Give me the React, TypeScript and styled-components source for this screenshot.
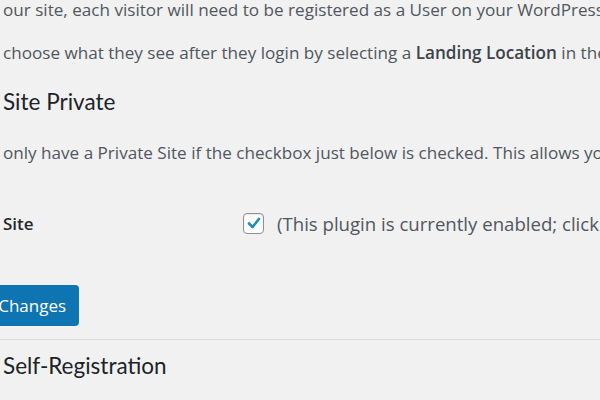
import React from "react";
import styled, { createGlobalStyle } from "styled-components";

const Global = createGlobalStyle`
  html, body { margin: 0; padding: 0; background: #f1f1f1; overflow: hidden; }
  body { width: 600px; height: 400px; font-family: "Open Sans", "Noto Sans", sans-serif; }
`;

const Page = styled.div`
  width: 600px;
  height: 400px;
  overflow: hidden;
  padding-left: 3px;
  box-sizing: border-box;
  color: #50575e;
`;

const Para = styled.p<{ $top: number }>`
  margin: ${(p) => p.$top}px 0 0 0;
  font-size: 17.1px;
  line-height: 24px;
  white-space: nowrap;
  color: #50575e;
  b { font-weight: 600; color: #3c434a; }
`;

const Heading = styled.h2<{ $top: number }>`
  margin: ${(p) => p.$top}px 0 0 0;
  font-family: Lato, "Open Sans", sans-serif;
  font-size: 22.5px;
  line-height: 30px;
  font-weight: 400;
  color: #1d2327;
  white-space: nowrap;
`;

const Row = styled.div<{ $top: number }>`
  margin-top: ${(p) => p.$top}px;
  display: flex;
  align-items: center;
  height: 24px;
  white-space: nowrap;
`;

const Label = styled.div`
  flex: none;
  width: 240px;
  font-size: 17px;
  font-weight: 600;
  color: #23282d;
`;

const Box = styled.span`
  width: 19px;
  height: 19px;
  border: 1px solid #8c8f94;
  border-radius: 4px;
  background: #fff;
  box-shadow: inset 0 1px 2px rgba(0, 0, 0, 0.1);
  display: flex;
  align-items: center;
  justify-content: center;
  margin-right: 13px;
  flex: none;
`;

const Hint = styled.span`
  font-size: 18.6px;
  color: #50575e;
`;

const Button = styled.button`
  margin-top: 50px;
  margin-left: -59px;
  height: 41px;
  padding: 0 13px;
  border: none;
  border-radius: 4px;
  background: #0f74b2;
  color: #fff;
  font-family: "Open Sans", "Noto Sans", sans-serif;
  font-size: 17px;
  font-weight: 500;
  display: block;
`;

const Divider = styled.hr`
  margin: 13px 0 0 -3px;
  border: none;
  border-top: 1px solid #dcdcde;
  height: 0;
`;

export default function App() {
  return (
    <>
      <Global />
      <Page>
        <Para $top={-2}>
          our site, each visitor will need to be registered as a User on your WordPress site.
        </Para>
        <Para $top={19}>
          choose what they see after they login by selecting a <b>Landing Location</b> in the
        </Para>
        <Heading $top={22}>Site Private</Heading>
        <Para $top={24}>
          only have a Private Site if the checkbox just below is checked. This allows you to
        </Para>
        <Row $top={46}>
          <Label>Site</Label>
          <Box>
            <svg width="16" height="16" viewBox="0 0 16 16">
              <path d="M3 8.5 L6.5 12 L13 4" fill="none" stroke="#1e8cbe" strokeWidth="2.6" strokeLinecap="round" strokeLinejoin="round" />
            </svg>
          </Box>
          <Hint>(This plugin is currently enabled; click to disable)</Hint>
        </Row>
        <Button>Save Changes</Button>
        <Divider />
        <Heading $top={11}>Self-Registration</Heading>
      </Page>
    </>
  );
}
